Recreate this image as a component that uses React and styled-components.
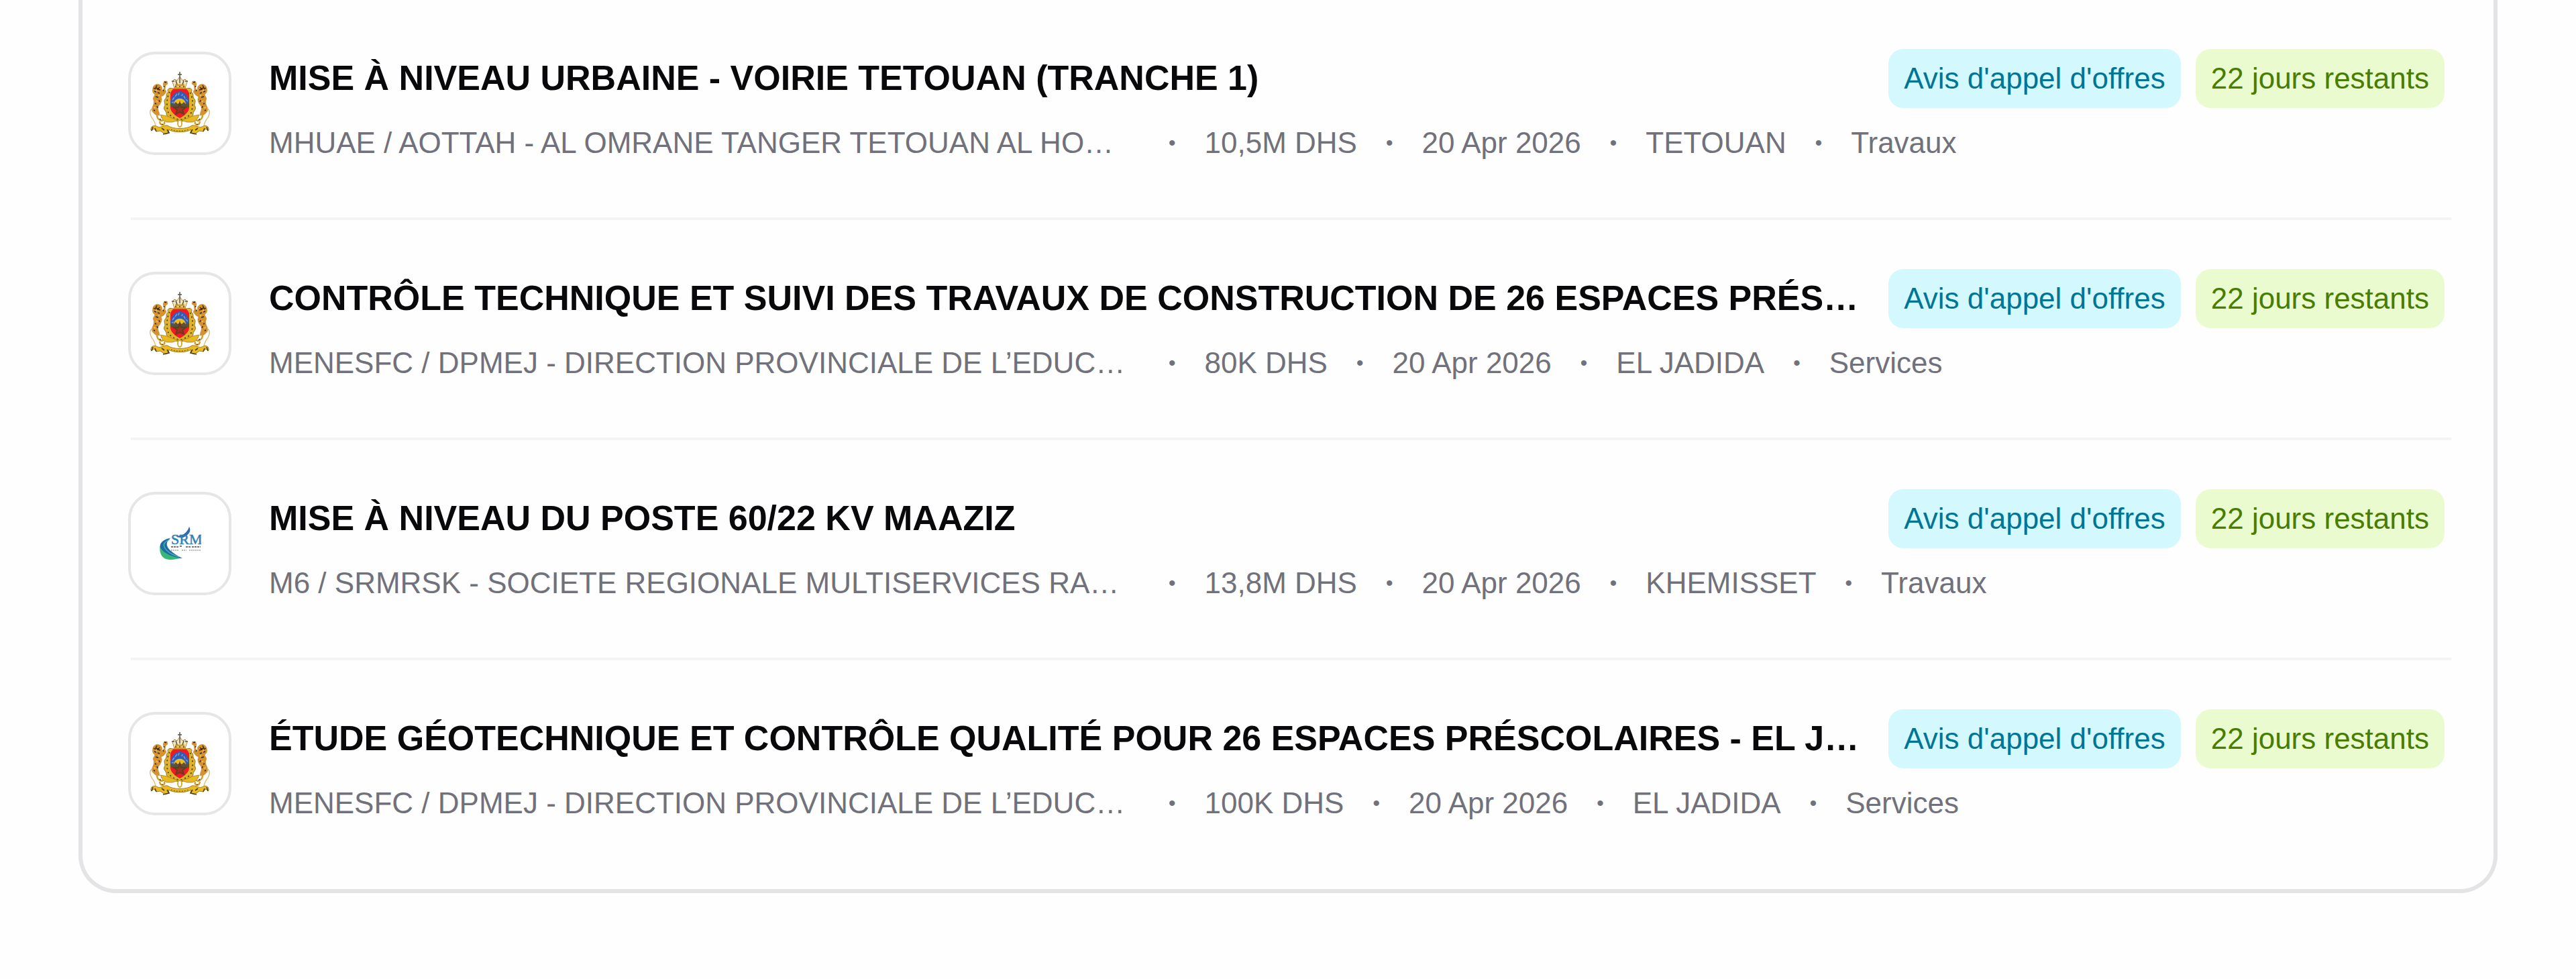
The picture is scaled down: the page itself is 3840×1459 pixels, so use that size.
import React from 'react'
import styled, { createGlobalStyle } from 'styled-components'

const tenders = [
    {
        id: 1,
        logo: 'arms',
        title: 'MISE À NIVEAU URBAINE - VOIRIE TETOUAN (TRANCHE 1)',
        buyer: 'MHUAE / AOTTAH - AL OMRANE TANGER TETOUAN AL HO…',
        amount: '10,5M DHS',
        date: '20 Apr 2026',
        city: 'TETOUAN',
        category: 'Travaux',
    },
    {
        id: 2,
        logo: 'arms',
        title: 'CONTRÔLE TECHNIQUE ET SUIVI DES TRAVAUX DE CONSTRUCTION DE 26 ESPACES PRÉS…',
        buyer: 'MENESFC / DPMEJ - DIRECTION PROVINCIALE DE L’EDUC…',
        amount: '80K DHS',
        date: '20 Apr 2026',
        city: 'EL JADIDA',
        category: 'Services',
    },
    {
        id: 3,
        logo: 'srm',
        title: 'MISE À NIVEAU DU POSTE 60/22 KV MAAZIZ',
        buyer: 'M6 / SRMRSK - SOCIETE REGIONALE MULTISERVICES RA…',
        amount: '13,8M DHS',
        date: '20 Apr 2026',
        city: 'KHEMISSET',
        category: 'Travaux',
    },
    {
        id: 4,
        logo: 'arms',
        title: 'ÉTUDE GÉOTECHNIQUE ET CONTRÔLE QUALITÉ POUR 26 ESPACES PRÉSCOLAIRES - EL J…',
        buyer: 'MENESFC / DPMEJ - DIRECTION PROVINCIALE DE L’EDUC…',
        amount: '100K DHS',
        date: '20 Apr 2026',
        city: 'EL JADIDA',
        category: 'Services',
    },
]

// one lion, used twice (mirrored on the right side)
const Lion = () => (
    <g>
        <path
            d="M5 24 C6 19 12 17 16 20 C19 22 19 25 18 29 L22 24 L20 18 L22 14 L26 14 L27 18 L24 20 L23 26 L25 30 L21 35 L17 37 C19 41 18 45 15 49 C12 52 12 56 14 60 L15 65 L9 64 C5 61 2 58 4 53 C6 49 7 46 6 42 C4 39 7 37 8 34 C4 31 4 28 5 24 Z"
            fill="#d8922c"
            stroke="#b98a3c"
            strokeWidth=".6"
        />
        <path
            d="M6 24 l3 2 M11 20 l-2 4 l4 1 M15 23 l-3 3 l4 1 M7 29 l3 1 M12 31 l3 1 M22 15 l3 1 M21 21 l1 2 M20 27 l1 2 M9 37 l4 1 M14 42 l1 3 M8 47 l2 1 M11 51 l1 3 M6 57 l2 1"
            fill="none"
            stroke="#2e2614"
            strokeWidth="1.4"
        />
        <path d="M9 27 l2 2 M13 35 l2 1 M10 43 l2 2 M6 53 l3 1" fill="none" stroke="#f0c56a" strokeWidth="1.5" />
        <path d="M4 55 C0 57 0 61 2 66 C4 71 9 73 9 83" fill="none" stroke="#dfbd80" strokeWidth="1.4" />
        <path d="M11 64 C11 72 19 75 21 71 M15 74 C16 81 24 80 22 74 M26 71 L17 67" fill="none" stroke="#cf9e26" strokeWidth="2.4" />
        <path d="M15 70 l2 2 M18 79 l2 -1 M21 69 l2 1" fill="none" stroke="#4a3c18" strokeWidth="1.2" />
    </g>
)

const CoatOfArms = () => (
    <svg width="90" height="94" viewBox="0 0 90 94" aria-hidden="true">
        <Lion />
        <g transform="translate(90 0) scale(-1 1)">
            <Lion />
        </g>
        <path
            d="M34 25 C30 23 25 26 28 30 C23 33 27 37 23 41 C20 45 25 48 22 52 C20 57 26 59 25 63 C27 69 32 68 35 71 L45 75 L55 71 C58 68 63 69 65 63 C64 59 70 57 68 52 C65 48 70 45 67 41 C63 37 67 33 62 30 C65 26 60 23 56 25 Z"
            fill="#e0b32a"
            stroke="#8b701f"
            strokeWidth="1"
        />
        <path
            d="M30 30 C25 38 25 53 28 61 C32 68 38 69 45 72 C52 69 58 68 62 61 C65 53 65 38 60 30"
            fill="none"
            stroke="#4a3d17"
            strokeWidth="1.8"
            strokeDasharray="2 4"
        />
        <path d="M33 28 L36 25 H54 L57 28 L59 32 V53 C59 59 53 65 45 69 C37 65 31 59 31 53 V32 Z" fill="#f01a24" />
        <path d="M31 44 C33 35 38 30 45 29 C52 30 57 35 59 44 V49 H31 Z" fill="#2f5dbb" />
        <path d="M34 42 l3 -4 M38 37 l3 -4 M43 35 l1 -4 M48 36 l1 -3 M53 40 l-2 -4 M57 44 l-3 -3 M33 46 l3 -1" stroke="#8d9bb8" strokeWidth="1.5" />
        <path d="M36 48 C37 37 53 37 54 48 Z" fill="#eebb22" />
        <path d="M31 47 L36 48 L39 45 L42 48 L45 46 L48 48 L51 45 L54 48 L59 47 V53 H31 Z" fill="#5b5237" />
        <path d="M45 46 L47 53 L54 53 L49 57 L51 63 L45 60 L39 63 L41 57 L36 53 L43 53 Z" fill="#9a3423" stroke="#5e3f1c" strokeWidth="1.8" />
        <path d="M37 24 L34 15 L37 11 L41 13 L45 7 L49 13 L53 11 L56 15 L53 24 Z" fill="#f5e6bd" stroke="#a48a43" strokeWidth="1" />
        <path d="M36 24 H54 M38 20 H52" stroke="#cda02c" strokeWidth="3" />
        <path d="M45 0 V17 M42 4 H48 M39 13 L41 19 M51 13 L49 19 M33 14 h4 M53 14 h4" stroke="#5a5444" strokeWidth="1.5" />
        <path d="M38 22 h2 M44 22 h2 M50 22 h2" stroke="#4f4018" strokeWidth="1.5" />
        <path d="M16 64 L26 66 L36 70 L43 72 L34 75 L26 75 L20 72 Z M74 64 L64 66 L54 70 L47 72 L56 75 L64 75 L70 72 Z" fill="#eab922" stroke="#a27f20" strokeWidth=".8" />
        <ellipse cx="45" cy="77" rx="3" ry="5" fill="#fff" stroke="#d6a520" strokeWidth="1.8" />
        <path
            d="M2 87 C1 80 8 79 12 82 C17 84 21 79 27 80 C34 86 56 86 63 80 C69 79 73 84 78 82 C82 79 89 80 88 87 L83 85 L80 89 L74 88 L67 93 L61 91 L62 86 C54 91 36 91 28 86 L29 91 L23 93 L16 88 L10 89 L7 85 Z"
            fill="#ecbb22"
            stroke="#a27f20"
            strokeWidth="1"
        />
        <path d="M3 88 L5 82 M10 89 L8 84 M20 93 L29 91 L26 86 M70 93 L61 91 L64 86 M87 88 L85 82 M80 89 L82 84 M18 84 L22 87 M72 84 L68 87" fill="none" stroke="#4a3e1d" strokeWidth="1.6" />
        <path d="M32 86 C40 89 50 89 58 86" fill="none" stroke="#8b6e1c" strokeWidth="1.5" strokeDasharray="2 2" />
    </svg>
)

const SrmLogo = () => (
    <svg width="63" height="50" viewBox="0 0 63 50" aria-hidden="true">
        <path d="M2 27 C-1 39 5 49 15 49 C22 50 28 47 35 47 C23 43 12 37 8 29 Z" fill="#37b874" />
        <path d="M17 17 C7 18 0 25 2 31 C6 39 20 46 35 47 C22 41 13 33 12 28 C11 24 13 20 17 17 Z" fill="#1f6da6" />
        <path d="M16 19 C9 22 6 26 8 30 C11 37 20 42 30 45" fill="none" stroke="#55b7b0" strokeWidth="1.2" />
        <path d="M25 14 C35 14 42 9 45 0 C48 5 46 10 40 14 C36 17 30 17 25 14 Z" fill="#2f6cab" />
        <text x="18" y="26" fontFamily="'Liberation Serif', serif" fontSize="22" fill="#2f80b4" stroke="#2f80b4" strokeWidth=".5">
            SRM
        </text>
        <path d="M18 30 H29 M31 29 H35 M40 30 H47 M49 30 H62" stroke="#777" strokeWidth="2" strokeDasharray="3 1" />
        <path d="M18 35 H29 M34 35 H41 M45 35 H62" stroke="#a3a3a3" strokeWidth="1.4" strokeDasharray="2 1" />
    </svg>
)

const TenderRow = ({ tender }) => {
    return (
        <Row>
            <Avatar>{tender.logo === 'srm' ? <SrmLogo /> : <CoatOfArms />}</Avatar>
            <Content>
                <TopLine>
                    <Title>{tender.title}</Title>
                    <Badges>
                        <Badge $bg="#d3f8fe" $color="#007595">Avis d'appel d'offres</Badge>
                        <Badge $bg="#eafbd0" $color="#497d00">22 jours restants</Badge>
                    </Badges>
                </TopLine>
                <Meta>
                    <Buyer>{tender.buyer}</Buyer>
                    <Dot>•</Dot>
                    <span>{tender.amount}</span>
                    <Dot>•</Dot>
                    <span>{tender.date}</span>
                    <Dot>•</Dot>
                    <span>{tender.city}</span>
                    <Dot>•</Dot>
                    <span>{tender.category}</span>
                </Meta>
            </Content>
        </Row>
    )
}

const App = () => {
    return (
        <>
            <GlobalStyle />
            <Panel>
                <List>
                    {tenders.map((item) => {
                        return (<TenderRow key={item.id} tender={item} />)
                    })}
                </List>
            </Panel>
        </>
    )
}

const GlobalStyle = createGlobalStyle`
    *{
        box-sizing:border-box;
    }

    body{
        margin:0;
        background-color:#fefefe;
        color:#09090b;
        font-family:"Liberation Sans", Arial, sans-serif;
    }
`

const Panel = styled.main`
    margin:0 117px 128px;
    padding:0 63px 13px 72px;
    border:6px solid #e4e4e7;
    border-top:none;
    border-radius:0 0 56px 56px;
`

const List = styled.ul`
    margin:0;
    padding:0;
    list-style:none;
`

const Row = styled.li`
    display:flex;
    align-items:flex-start;
    gap:56px;
    height:328px;
    padding:73px 10px 0 0;

    &:not(:last-child){
        border-bottom:4px solid #f4f4f5;
    }
`

const Avatar = styled.div`
    display:flex;
    flex-shrink:0;
    align-items:center;
    justify-content:center;
    width:154px;
    height:154px;
    margin:4px 0 0 -4px;
    border:4px solid #e6e6e8;
    border-radius:40px;
    background-color:white;
`

const Content = styled.div`
    flex:1;
    min-width:0;
`

const TopLine = styled.div`
    display:flex;
    align-items:flex-start;
    justify-content:space-between;
    gap:40px;
`

const Title = styled.h3`
    margin:0;
    min-width:0;
    overflow:hidden;
    font-size:52px;
    font-weight:700;
    line-height:86px;
    text-overflow:ellipsis;
    white-space:nowrap;
`

const Badges = styled.div`
    display:flex;
    flex-shrink:0;
    gap:22px;
`

const Badge = styled.span`
    padding:0 23px;
    border-radius:22px;
    background-color:${(props) => props.$bg};
    color:${(props) => props.$color};
    font-size:44px;
    line-height:88px;
    white-space:nowrap;
`

const Meta = styled.div`
    display:flex;
    align-items:center;
    gap:43px;
    margin-top:16px;
    color:#71717b;
    font-size:44px;
    line-height:72px;
    white-space:nowrap;
`

const Buyer = styled.span`
    width:1298px;
    overflow:hidden;
    text-overflow:ellipsis;
`

const Dot = styled.span`
    font-size:30px;
`

export default App
